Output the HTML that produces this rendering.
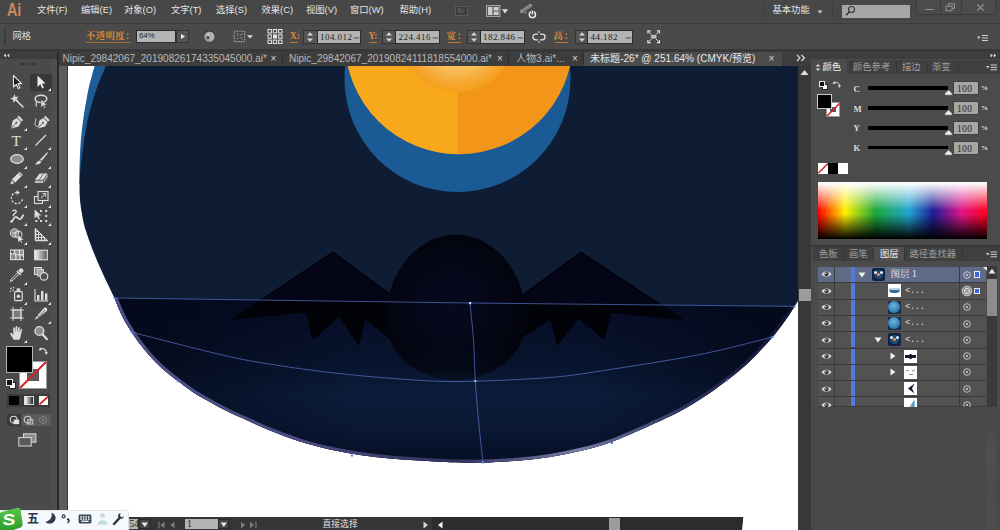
<!DOCTYPE html>
<html lang="zh-CN">
<head>
<meta charset="utf-8">
<title>Adobe Illustrator</title>
<style>
html,body{margin:0;padding:0;}
body{width:1000px;height:530px;overflow:hidden;background:#4a4a4a;position:relative;font-family:"Liberation Sans","Noto Sans CJK SC",sans-serif;font-size:9px;color:#e0e0e0;}
.abs{position:absolute;}
.t{position:absolute;white-space:nowrap;line-height:1;}
#menubar{left:0;top:0;width:1000px;height:22px;background:#474747;}
#menuline{left:0;top:22.5px;width:1000px;height:1.5px;background:#3c3c3c;}
#ctrlbar{left:0;top:24px;width:1000px;height:25px;background:#4a4a4a;}
#band{left:0;top:49px;width:1000px;height:3px;background:#383838;}
#tabbar{left:58px;top:52px;width:753px;height:14px;background:#3d3d3d;}
#toolhead{left:0;top:52px;width:56.5px;height:7px;background:#3d3d3d;}
#tools{left:0;top:59px;width:56.5px;height:471px;background:linear-gradient(90deg,#4a4a4a 0,#4a4a4a 50px,#4e4e4e 51px,#4e4e4e 100%);}
#toolgap{left:56.5px;top:52px;width:2px;height:478px;background:#2a2a2a;}
#paste{left:58.5px;top:66px;width:739.5px;height:451px;background:linear-gradient(90deg,#5c5c5c 0,#5c5c5c 8.5px,#3a3a3a 8.5px,#3a3a3a 9.5px,#fff 9.5px);}
#canvas{left:68px;top:66px;width:730px;height:451px;background:#fff;overflow:hidden;}
#vscroll{left:798px;top:66px;width:13px;height:464px;background:#383838;}
#dock{left:811px;top:52px;width:189px;height:478px;background:#4a4a4a;}
#status{left:58px;top:517px;width:685px;height:13px;background:#363636;}
.mi{top:6px;}
.lbl{font-family:"Liberation Serif","Noto Serif CJK SC",serif;font-weight:700;font-size:9.3px;color:#e08a35;}
.fld{background:#b4b4b4;border:1px solid #2c2c2c;box-sizing:border-box;}
.ft{position:absolute;left:2.5px;top:2px;font-family:"Liberation Serif","Noto Serif CJK SC",serif;font-size:9px;letter-spacing:0.45px;line-height:1;color:#1e1e1e;white-space:nowrap;}
.tb{top:53.5px;font-size:10.05px;color:#b8b8b8;}
.tx{top:54px;font-size:10px;color:#d8d8d8;}
.ptab{top:63.2px;font-size:9.3px;color:#9e9e9e;}
</style>
</head>
<body>
<div id="menubar" class="abs"></div>
<div id="menuline" class="abs"></div>
<div id="ctrlbar" class="abs"></div>
<div id="band" class="abs"></div>
<div id="tabbar" class="abs"></div>
<div id="toolhead" class="abs"></div>
<div id="tools" class="abs"></div>
<div id="toolgap" class="abs"></div>
<div id="paste" class="abs"></div>
<div id="canvas" class="abs">
<!--ART--><svg class="abs" style="left:0;top:0" width="730" height="451" viewBox="68 66 730 451">
<defs>
<clipPath id="cpMain"><path d="M105.8,66.0 C104.2,70.0 99.2,81.0 96.2,90.0 C93.2,99.0 89.9,110.0 87.7,120.0 C85.5,130.0 84.0,141.7 82.8,150.0 C81.6,158.3 80.9,164.2 80.4,170.0 C79.9,175.8 79.7,180.5 79.6,185.0 C79.5,189.5 79.5,192.7 79.8,197.0 C80.1,201.3 80.4,205.1 81.4,210.6 C82.4,216.1 83.0,221.8 85.6,230.0 C88.2,238.2 92.6,250.0 96.8,260.0 C101.0,270.0 107.6,283.7 110.6,290.0 C113.5,296.3 112.5,293.6 114.5,298.0 C116.5,302.4 119.5,310.7 122.4,316.4 C125.3,322.1 128.4,327.1 131.7,332.2 C135.0,337.3 138.7,342.3 142.2,346.8 C145.7,351.3 148.8,355.0 152.8,359.2 C156.8,363.4 161.8,368.1 166.0,371.8 C170.2,375.5 173.5,377.8 177.9,381.1 C182.3,384.4 187.8,388.6 192.4,391.7 C197.0,394.8 201.2,397.1 205.6,399.6 C210.0,402.2 214.4,404.7 218.8,407.0 C223.2,409.3 227.6,411.5 232.0,413.6 C236.4,415.7 238.9,416.6 245.2,419.4 C251.5,422.2 260.9,426.8 270.0,430.5 C279.1,434.2 290.0,438.3 300.0,441.5 C310.0,444.7 320.0,447.2 330.0,449.5 C340.0,451.8 350.0,453.5 360.0,455.0 C370.0,456.5 380.0,457.6 390.0,458.5 C400.0,459.4 410.0,460.0 420.0,460.6 C430.0,461.2 439.6,461.9 450.0,462.2 C460.4,462.5 470.8,462.9 482.5,462.6 C494.2,462.3 508.8,461.4 520.0,460.5 C531.2,459.6 540.0,458.6 550.0,457.0 C560.0,455.4 570.0,453.4 580.0,451.0 C590.0,448.6 600.0,446.0 610.0,442.5 C620.0,439.0 632.8,433.1 640.0,430.0 C647.2,426.9 646.6,427.1 653.2,424.0 C659.8,420.9 670.8,416.2 679.6,411.5 C688.4,406.8 698.1,400.8 706.0,395.6 C713.9,390.4 720.5,385.4 727.1,380.3 C733.7,375.2 740.3,369.9 745.6,365.2 C750.9,360.5 754.3,356.7 758.8,352.0 C763.3,347.3 768.1,342.3 772.5,337.0 C776.9,331.7 781.5,325.5 785.2,320.4 C788.9,315.3 790.0,313.3 794.5,306.4 C799.0,299.5 809.1,283.6 812.0,279.0 L812,66 Z"/></clipPath>
<clipPath id="cpLow"><path d="M114.5,298.0 C115.8,301.1 119.5,310.7 122.4,316.4 C125.3,322.1 128.4,327.1 131.7,332.2 C135.0,337.3 138.7,342.3 142.2,346.8 C145.7,351.3 148.8,355.0 152.8,359.2 C156.8,363.4 161.8,368.1 166.0,371.8 C170.2,375.5 173.5,377.8 177.9,381.1 C182.3,384.4 187.8,388.6 192.4,391.7 C197.0,394.8 201.2,397.1 205.6,399.6 C210.0,402.2 214.4,404.7 218.8,407.0 C223.2,409.3 227.6,411.5 232.0,413.6 C236.4,415.7 238.9,416.6 245.2,419.4 C251.5,422.2 260.9,426.8 270.0,430.5 C279.1,434.2 290.0,438.3 300.0,441.5 C310.0,444.7 320.0,447.2 330.0,449.5 C340.0,451.8 350.0,453.5 360.0,455.0 C370.0,456.5 380.0,457.6 390.0,458.5 C400.0,459.4 410.0,460.0 420.0,460.6 C430.0,461.2 439.6,461.9 450.0,462.2 C460.4,462.5 470.8,462.9 482.5,462.6 C494.2,462.3 508.8,461.4 520.0,460.5 C531.2,459.6 540.0,458.6 550.0,457.0 C560.0,455.4 570.0,453.4 580.0,451.0 C590.0,448.6 600.0,446.0 610.0,442.5 C620.0,439.0 632.8,433.1 640.0,430.0 C647.2,426.9 646.6,427.1 653.2,424.0 C659.8,420.9 670.8,416.2 679.6,411.5 C688.4,406.8 698.1,400.8 706.0,395.6 C713.9,390.4 720.5,385.4 727.1,380.3 C733.7,375.2 740.3,369.9 745.6,365.2 C750.9,360.5 754.3,356.7 758.8,352.0 C763.3,347.3 768.1,342.3 772.5,337.0 C776.9,331.7 781.5,325.5 785.2,320.4 C788.9,315.3 793.0,308.7 794.5,306.4 L794.5,306.4 L114.5,298 Z"/></clipPath>
<linearGradient id="gLow" x1="0" y1="298" x2="0" y2="463" gradientUnits="userSpaceOnUse">
<stop offset="0" stop-color="#060c24"/><stop offset="0.4" stop-color="#08142e"/><stop offset="0.58" stop-color="#0b1c3a"/><stop offset="0.78" stop-color="#0a1834"/><stop offset="1" stop-color="#050e24"/>
</linearGradient>
<linearGradient id="gSide" x1="115" y1="0" x2="798" y2="0" gradientUnits="userSpaceOnUse">
<stop offset="0" stop-color="#030716" stop-opacity="0.75"/><stop offset="0.35" stop-color="#030716" stop-opacity="0"/><stop offset="0.7" stop-color="#030716" stop-opacity="0"/><stop offset="1" stop-color="#030716" stop-opacity="0.75"/>
</linearGradient>
<radialGradient id="gGlow" cx="457" cy="34" r="58" gradientUnits="userSpaceOnUse">
<stop offset="0" stop-color="#fde6ae"/><stop offset="0.5" stop-color="#fac869"/><stop offset="0.85" stop-color="#f6a832"/><stop offset="1" stop-color="#f59f1c"/>
</radialGradient>
<radialGradient id="gBody" cx="452" cy="305" r="80" gradientUnits="userSpaceOnUse">
<stop offset="0" stop-color="#070a20"/><stop offset="0.55" stop-color="#050717"/><stop offset="1" stop-color="#02030a"/>
</radialGradient>
<linearGradient id="gRim" x1="110" y1="0" x2="800" y2="0" gradientUnits="userSpaceOnUse">
<stop offset="0" stop-color="#4e5088"/><stop offset="0.3" stop-color="#484a80"/><stop offset="0.5" stop-color="#30325e"/><stop offset="0.68" stop-color="#7a7ca8"/><stop offset="0.85" stop-color="#3a3c70" stop-opacity="0.7"/><stop offset="1" stop-color="#2a2c60" stop-opacity="0.3"/>
</linearGradient>
<linearGradient id="gBodyFade" x1="0" y1="345" x2="0" y2="381" gradientUnits="userSpaceOnUse">
<stop offset="0" stop-color="#0a1833" stop-opacity="0"/><stop offset="0.7" stop-color="#0a1833" stop-opacity="0.25"/><stop offset="1" stop-color="#0a1833" stop-opacity="0.7"/>
</linearGradient>
<clipPath id="cpSunL"><rect x="300" y="0" width="157.7" height="300"/></clipPath>
</defs>
<path d="M94.6,66.0 C93.5,70.0 90.2,81.0 88.3,90.0 C86.4,99.0 84.5,111.2 83.2,120.0 C81.9,128.8 81.3,135.1 80.7,142.6 C80.1,150.1 79.8,158.1 79.6,165.0 C79.4,171.9 79.4,180.8 79.4,184.0 L200,184 L200,66 Z" fill="#1d5c96"/>
<path d="M105.8,66.0 C104.2,70.0 99.2,81.0 96.2,90.0 C93.2,99.0 89.9,110.0 87.7,120.0 C85.5,130.0 84.0,141.7 82.8,150.0 C81.6,158.3 80.9,164.2 80.4,170.0 C79.9,175.8 79.7,180.5 79.6,185.0 C79.5,189.5 79.5,192.7 79.8,197.0 C80.1,201.3 80.4,205.1 81.4,210.6 C82.4,216.1 83.0,221.8 85.6,230.0 C88.2,238.2 92.6,250.0 96.8,260.0 C101.0,270.0 107.6,283.7 110.6,290.0 C113.5,296.3 112.5,293.6 114.5,298.0 C116.5,302.4 119.5,310.7 122.4,316.4 C125.3,322.1 128.4,327.1 131.7,332.2 C135.0,337.3 138.7,342.3 142.2,346.8 C145.7,351.3 148.8,355.0 152.8,359.2 C156.8,363.4 161.8,368.1 166.0,371.8 C170.2,375.5 173.5,377.8 177.9,381.1 C182.3,384.4 187.8,388.6 192.4,391.7 C197.0,394.8 201.2,397.1 205.6,399.6 C210.0,402.2 214.4,404.7 218.8,407.0 C223.2,409.3 227.6,411.5 232.0,413.6 C236.4,415.7 238.9,416.6 245.2,419.4 C251.5,422.2 260.9,426.8 270.0,430.5 C279.1,434.2 290.0,438.3 300.0,441.5 C310.0,444.7 320.0,447.2 330.0,449.5 C340.0,451.8 350.0,453.5 360.0,455.0 C370.0,456.5 380.0,457.6 390.0,458.5 C400.0,459.4 410.0,460.0 420.0,460.6 C430.0,461.2 439.6,461.9 450.0,462.2 C460.4,462.5 470.8,462.9 482.5,462.6 C494.2,462.3 508.8,461.4 520.0,460.5 C531.2,459.6 540.0,458.6 550.0,457.0 C560.0,455.4 570.0,453.4 580.0,451.0 C590.0,448.6 600.0,446.0 610.0,442.5 C620.0,439.0 632.8,433.1 640.0,430.0 C647.2,426.9 646.6,427.1 653.2,424.0 C659.8,420.9 670.8,416.2 679.6,411.5 C688.4,406.8 698.1,400.8 706.0,395.6 C713.9,390.4 720.5,385.4 727.1,380.3 C733.7,375.2 740.3,369.9 745.6,365.2 C750.9,360.5 754.3,356.7 758.8,352.0 C763.3,347.3 768.1,342.3 772.5,337.0 C776.9,331.7 781.5,325.5 785.2,320.4 C788.9,315.3 790.0,313.3 794.5,306.4 C799.0,299.5 809.1,283.6 812.0,279.0 L812,66 Z" fill="#0e1d34"/>
<g clip-path="url(#cpMain)">
<circle cx="457.5" cy="79" r="113" fill="#1b5b95"/>
<circle cx="459" cy="40.3" r="114" fill="#f39519"/>
<circle cx="459" cy="40.3" r="114" fill="#f7a81b" clip-path="url(#cpSunL)"/>
<circle cx="457" cy="34" r="58" fill="url(#gGlow)"/>
</g>
<g clip-path="url(#cpLow)">
<rect x="100" y="290" width="720" height="180" fill="url(#gLow)"/>
<rect x="100" y="290" width="720" height="180" fill="url(#gSide)"/>
<path d="M114.5,298.0 C115.8,301.1 119.5,310.7 122.4,316.4 C125.3,322.1 128.4,327.1 131.7,332.2 C135.0,337.3 138.7,342.3 142.2,346.8 C145.7,351.3 148.8,355.0 152.8,359.2 C156.8,363.4 161.8,368.1 166.0,371.8 C170.2,375.5 173.5,377.8 177.9,381.1 C182.3,384.4 187.8,388.6 192.4,391.7 C197.0,394.8 201.2,397.1 205.6,399.6 C210.0,402.2 214.4,404.7 218.8,407.0 C223.2,409.3 227.6,411.5 232.0,413.6 C236.4,415.7 238.9,416.6 245.2,419.4 C251.5,422.2 260.9,426.8 270.0,430.5 C279.1,434.2 290.0,438.3 300.0,441.5 C310.0,444.7 320.0,447.2 330.0,449.5 C340.0,451.8 350.0,453.5 360.0,455.0 C370.0,456.5 380.0,457.6 390.0,458.5 C400.0,459.4 410.0,460.0 420.0,460.6 C430.0,461.2 439.6,461.9 450.0,462.2 C460.4,462.5 470.8,462.9 482.5,462.6 C494.2,462.3 508.8,461.4 520.0,460.5 C531.2,459.6 540.0,458.6 550.0,457.0 C560.0,455.4 570.0,453.4 580.0,451.0 C590.0,448.6 600.0,446.0 610.0,442.5 C620.0,439.0 632.8,433.1 640.0,430.0 C647.2,426.9 646.6,427.1 653.2,424.0 C659.8,420.9 670.8,416.2 679.6,411.5 C688.4,406.8 698.1,400.8 706.0,395.6 C713.9,390.4 720.5,385.4 727.1,380.3 C733.7,375.2 740.3,369.9 745.6,365.2 C750.9,360.5 754.3,356.7 758.8,352.0 C763.3,347.3 768.1,342.3 772.5,337.0 C776.9,331.7 781.5,325.5 785.2,320.4 C788.9,315.3 793.0,308.7 794.5,306.4" fill="none" stroke="url(#gRim)" stroke-width="6"/>
</g>
<g clip-path="url(#cpMain)">
<polygon points="333.0,252.3 232.8,319.0 306.6,311.6 313.0,339.0 339.4,315.5 358.6,344.4 365.0,318.0 392.0,340.0 392.0,296.0" fill="#040617" stroke="#02030b" stroke-width="1.6" stroke-linejoin="round"/>
<polygon points="581.0,252.3 681.7,319.0 610.5,312.3 604.0,339.0 578.4,317.4 557.5,344.4 551.0,318.0 520.0,338.0 520.0,297.0" fill="#040617" stroke="#02030b" stroke-width="1.6" stroke-linejoin="round"/>
<g clip-path="url(#cpLow)"><polygon points="333.0,252.3 232.8,319.0 306.6,311.6 313.0,339.0 339.4,315.5 358.6,344.4 365.0,318.0 392.0,340.0 392.0,296.0" fill="#020309"/><polygon points="581.0,252.3 681.7,319.0 610.5,312.3 604.0,339.0 578.4,317.4 557.5,344.4 551.0,318.0 520.0,338.0 520.0,297.0" fill="#020309"/></g>
<path d="M386,320 A70,85.5 0 0 1 526,320 A70,60 0 0 1 386,320 Z" fill="url(#gBody)"/>
<path d="M386,320 A70,85.5 0 0 1 526,320 A70,60 0 0 1 386,320 Z" fill="url(#gBodyFade)"/>
</g>
<g fill="none" stroke="#6686e6" stroke-width="0.8" stroke-opacity="0.75">
<path d="M114.5,298 L470,303 L794.5,306.4"/>
<path d="M131.7,332.2 C145.8,335.8 194.6,348.4 216.0,353.5 C237.4,358.6 241.0,359.3 260.0,362.5 C279.0,365.7 306.7,369.8 330.0,372.5 C353.3,375.2 378.3,377.5 400.0,379.0 C421.7,380.5 435.0,381.8 460.0,381.5 C485.0,381.2 525.0,379.5 550.0,377.5 C575.0,375.5 585.0,373.3 610.0,369.5 C635.0,365.7 672.9,359.9 700.0,354.5 C727.1,349.1 760.4,339.9 772.5,337.0"/>
<path d="M470.0,303.0 C470.6,309.2 472.6,327.0 473.5,340.0 C474.4,353.0 474.4,366.8 475.3,381.0 C476.2,395.2 477.7,411.4 479.0,425.0 C480.3,438.6 482.3,456.2 483.0,462.4"/>
</g>
<!--DOTS--><rect x="113.5" y="297.0" width="2" height="2" fill="#5a7de4"/><rect x="130.7" y="331.2" width="2" height="2" fill="#5a7de4"/><rect x="176.9" y="380.1" width="2" height="2" fill="#5a7de4"/><rect x="793.5" y="305.4" width="2" height="2" fill="#5a7de4"/><rect x="771.5" y="336.0" width="2" height="2" fill="#5a7de4"/><rect x="726.1" y="379.3" width="2" height="2" fill="#5a7de4"/><rect x="482.0" y="461.4" width="2" height="2" fill="#5a7de4"/><rect x="351.0" y="454.5" width="2" height="2" fill="#5a7de4"/><rect x="611.0" y="442.0" width="2" height="2" fill="#5a7de4"/><rect x="469" y="302" width="2.2" height="2.2" fill="#c8d4fa"/><rect x="474.3" y="380" width="2" height="2" fill="#a8b8f4"/>
</svg><!--/ART-->
</div>
<div id="vscroll" class="abs"></div>
<div id="dock" class="abs"></div>
<div id="status" class="abs"></div>
<!--MENU-->
<div class="t" style="left:7px;top:2.2px;font-size:17.5px;font-weight:bold;color:#c9885c;transform:scaleX(0.82);transform-origin:0 0;">Ai</div>
<div id="menus" class="abs" style="left:0;top:0;height:22px;font-size:9.3px;color:#e6e6e6;">
<span class="t mi" style="left:37px;">文件(F)</span>
<span class="t mi" style="left:81px;">编辑(E)</span>
<span class="t mi" style="left:124px;">对象(O)</span>
<span class="t mi" style="left:171px;">文字(T)</span>
<span class="t mi" style="left:216px;">选择(S)</span>
<span class="t mi" style="left:261.5px;">效果(C)</span>
<span class="t mi" style="left:306px;">视图(V)</span>
<span class="t mi" style="left:350px;">窗口(W)</span>
<span class="t mi" style="left:399.5px;">帮助(H)</span>
</div>
<div class="abs" style="left:455px;top:6px;width:13px;height:10px;background:#3c3c3c;border:1px solid #5a5a5a;box-sizing:border-box;"></div>
<div class="t" style="left:457.5px;top:7.5px;font-size:6.5px;font-weight:bold;color:#5e5e5e;">Br</div>
<svg class="abs" style="left:486px;top:5px" width="24" height="12" viewBox="0 0 24 12"><rect x="0.5" y="0.5" width="13.5" height="11" fill="#5a5a5a" stroke="#a4a4a4"/><rect x="2" y="2" width="4.4" height="8" fill="#cdcdcd"/><rect x="7.6" y="2" width="5" height="3.6" fill="#cdcdcd"/><rect x="7.6" y="6.6" width="5" height="3.4" fill="#cdcdcd"/><path d="M16,4.2 L22,4.2 L19,8.4 Z" fill="#e0e0e0"/></svg>
<svg class="abs" style="left:519px;top:3px" width="20" height="17" viewBox="0 0 20 17"><path d="M2.6,8.6 L11.4,2.6" stroke="#8c8c8c" stroke-width="3.6" stroke-linecap="round"/><path d="M4.2,5.6 L6.6,9.2 M6.6,4 L9,7.6 M9,2.4 L11.2,5.8" stroke="#565656" stroke-width="0.7"/><path d="M5.2,9.6 L7.6,8.2 L7,11.6 Z" fill="#8c8c8c"/><circle cx="13.4" cy="11.6" r="3.1" fill="#474747" stroke="#ececec" stroke-width="1.5"/><path d="M13.4,6.6 L13.4,11.4" stroke="#474747" stroke-width="3"/><path d="M13.4,7.6 L13.4,11.6" stroke="#ececec" stroke-width="1.5"/></svg>
<div class="t" style="left:772.5px;top:6px;font-size:9.3px;color:#e6e6e6;">基本功能</div>
<svg class="abs" style="left:817px;top:10px" width="7" height="5"><path d="M0.5,0.5 L5.5,0.5 L3,3.5 Z" fill="#d0d0d0"/></svg>
<div class="abs" style="left:841.5px;top:4.5px;width:68.5px;height:13px;background:#a6a6a6;"></div>
<svg class="abs" style="left:845px;top:5px" width="12" height="12" viewBox="0 0 12 12"><circle cx="6.5" cy="4.5" r="3" fill="none" stroke="#333" stroke-width="1.1"/><path d="M4.3,6.8 L1.2,10.2" stroke="#333" stroke-width="1.5"/></svg>
<div class="abs" style="left:916.5px;top:0;width:79px;height:13.5px;background:#4b4b4b;"></div>
<div class="abs" style="left:916px;top:0;width:1px;height:14px;background:#3a3a3a;"></div><div class="abs" style="left:939.5px;top:0;width:1px;height:14px;background:#3a3a3a;"></div><div class="abs" style="left:960.5px;top:0;width:1px;height:14px;background:#3a3a3a;"></div><div class="abs" style="left:995px;top:0;width:1px;height:14px;background:#3a3a3a;"></div><div class="abs" style="left:916px;top:13.5px;width:80px;height:1px;background:#3a3a3a;"></div>
<div class="abs" style="left:764px;top:2px;width:1px;height:18px;background:#3e3e3e;"></div><div class="abs" style="left:832px;top:2px;width:1px;height:18px;background:#3e3e3e;"></div>
<div class="abs" style="left:925px;top:8.5px;width:8.5px;height:1.8px;background:#8e8e8e;"></div>
<svg class="abs" style="left:945px;top:2.5px" width="11" height="9" viewBox="0 0 11 9"><rect x="3.5" y="0.8" width="6" height="4.6" fill="none" stroke="#8e8e8e" stroke-width="1.1"/><rect x="1" y="3.2" width="6" height="4.6" fill="#4b4b4b" stroke="#8e8e8e" stroke-width="1.1"/></svg>
<svg class="abs" style="left:975.5px;top:3px" width="9" height="9" viewBox="0 0 9 9"><path d="M1.2,1.2 L7.8,7.8 M7.8,1.2 L1.2,7.8" stroke="#8e8e8e" stroke-width="1.3"/></svg>
<!--/MENU-->
<!--CTRL-->
<div class="abs" style="left:4px;top:28px;width:2px;height:17px;background:repeating-linear-gradient(#2f2f2f 0 1px,#4a4a4a 1px 2px);"></div>
<div class="t" style="left:12.5px;top:31.5px;font-size:9.3px;color:#dcdcdc;">网格</div>
<div class="t lbl" style="left:86px;top:31.5px;letter-spacing:0.45px;">不透明度：</div>
<div class="abs" style="left:86px;top:42px;width:45px;height:1px;background:#c07830;opacity:0.75;"></div>
<div class="abs fld" style="left:136px;top:30px;width:40px;height:13px;"><span class="ft" style="font-family:'Liberation Sans',sans-serif;font-size:7.8px;left:2px;top:1.2px;letter-spacing:0;">64%</span></div>
<div class="abs" style="left:176px;top:30px;width:13px;height:13px;background:#545454;border:1px solid #333;box-sizing:border-box;"></div>
<svg class="abs" style="left:176px;top:30px" width="13" height="13"><path d="M5,4 L9,6.5 L5,9 Z" fill="#f0f0f0"/></svg>
<svg class="abs" style="left:202px;top:29px" width="15" height="15" viewBox="0 0 15 15"><defs><radialGradient id="rg1" cx="0.6" cy="0.4" r="0.7"><stop offset="0" stop-color="#d6d6d6"/><stop offset="1" stop-color="#8a8a8a"/></radialGradient></defs><circle cx="7.3" cy="7.5" r="5.9" fill="#2e2e2e"/><circle cx="7.3" cy="7.8" r="5.3" fill="url(#rg1)"/><circle cx="6" cy="8.6" r="1.7" fill="#4a4a4a"/><path d="M7.8,4.4 L8.6,7 L10.6,7.8" fill="none" stroke="#777" stroke-width="0.8"/></svg>
<svg class="abs" style="left:233px;top:29px" width="22" height="15" viewBox="0 0 22 15"><rect x="1.2" y="2.2" width="10.4" height="10.4" fill="none" stroke="#b4b4b4" stroke-width="1.1" stroke-dasharray="1.3 1.3"/><path d="M3.6,4.6 L9.2,10.2 M9.2,4.6 L3.6,10.2" stroke="#a0a0a0" stroke-width="1"/><circle cx="6.4" cy="7.4" r="1.5" fill="#4a4a4a"/><path d="M14,6.2 L20,6.2 L17,9.4 Z" fill="#e0e0e0"/></svg>
<svg class="abs" style="left:267px;top:28px" width="16" height="17" viewBox="0 0 16 17"><g fill="none" stroke="#e4e4e4" stroke-width="1"><rect x="1" y="1.5" width="3.4" height="3.4"/><rect x="6.3" y="1.5" width="3.4" height="3.4"/><rect x="11.6" y="1.5" width="3.4" height="3.4"/><rect x="1" y="6.8" width="3.4" height="3.4"/><rect x="11.6" y="6.8" width="3.4" height="3.4"/><rect x="1" y="12.1" width="3.4" height="3.4"/><rect x="6.3" y="12.1" width="3.4" height="3.4"/><rect x="11.6" y="12.1" width="3.4" height="3.4"/></g><rect x="6" y="6.5" width="4" height="4" fill="#e4e4e4"/></svg>
<div class="t lbl" style="left:290px;top:31.5px;font-family:'Liberation Serif','Noto Serif CJK SC',serif;">X:</div>
<div class="abs" style="left:290px;top:42px;width:8px;height:1px;background:#c07830;"></div>
<div class="abs" style="left:303px;top:29.5px;width:14.5px;height:14.2px;background:#555;border:1px solid #333;box-sizing:border-box;"></div>
<svg class="abs" style="left:303px;top:29.8px" width="14" height="14" viewBox="-1 0 14 14"><path d="M3,5.5 L6,2.2 L9,5.5 Z M3,8.5 L6,11.8 L9,8.5 Z" fill="#d8d8d8"/></svg><div class="abs fld" style="left:316.5px;top:29.5px;width:44.0px;height:14.2px;"><span class="ft">104.012</span><span style="position:absolute;right:0.5px;top:5px;font-size:3.6px;color:#333;letter-spacing:-0.2px;font-family:'Liberation Sans',sans-serif;">mm</span></div>
<div class="t lbl" style="left:368.5px;top:31.5px;font-family:'Liberation Serif','Noto Serif CJK SC',serif;">Y:</div>
<div class="abs" style="left:368.5px;top:42px;width:8px;height:1px;background:#c07830;"></div>
<div class="abs" style="left:381.8px;top:29.5px;width:14.5px;height:14.2px;background:#555;border:1px solid #333;box-sizing:border-box;"></div>
<svg class="abs" style="left:381.8px;top:29.8px" width="14" height="14" viewBox="-1 0 14 14"><path d="M3,5.5 L6,2.2 L9,5.5 Z M3,8.5 L6,11.8 L9,8.5 Z" fill="#d8d8d8"/></svg><div class="abs fld" style="left:395.0px;top:29.5px;width:44.5px;height:14.2px;"><span class="ft">224.416</span><span style="position:absolute;right:0.5px;top:5px;font-size:3.6px;color:#333;letter-spacing:-0.2px;font-family:'Liberation Sans',sans-serif;">mm</span></div>
<div class="t lbl" style="left:446.5px;top:31.5px;letter-spacing:1px;">宽：</div>
<div class="abs" style="left:447.5px;top:42px;width:13px;height:1px;background:#c07830;"></div>
<div class="abs" style="left:467px;top:29.5px;width:14.5px;height:14.2px;background:#555;border:1px solid #333;box-sizing:border-box;"></div>
<svg class="abs" style="left:467px;top:29.8px" width="14" height="14" viewBox="-1 0 14 14"><path d="M3,5.5 L6,2.2 L9,5.5 Z M3,8.5 L6,11.8 L9,8.5 Z" fill="#d8d8d8"/></svg><div class="abs fld" style="left:479.5px;top:29.5px;width:45.0px;height:14.2px;"><span class="ft">182.846</span><span style="position:absolute;right:0.5px;top:5px;font-size:3.6px;color:#333;letter-spacing:-0.2px;font-family:'Liberation Sans',sans-serif;">mm</span></div>
<svg class="abs" style="left:532px;top:30px" width="14" height="14" viewBox="0 0 14 14"><g fill="none" stroke="#e0e0e0" stroke-width="1.3"><path d="M6,4.2 L3.8,4.2 A2.7,2.7 0 0 0 3.8,9.8 L6,9.8"/><path d="M8,4.2 L10.2,4.2 A2.7,2.7 0 0 1 10.2,9.8 L8,9.8"/></g><path d="M7,1 L7,3 M7,11 L7,13" stroke="#e0e0e0" stroke-width="1"/></svg>
<div class="t lbl" style="left:553.5px;top:31.5px;letter-spacing:1px;">高：</div>
<div class="abs" style="left:554.5px;top:42px;width:13px;height:1px;background:#c07830;"></div>
<div class="abs" style="left:574.6px;top:29.5px;width:14.5px;height:14.2px;background:#555;border:1px solid #333;box-sizing:border-box;"></div>
<svg class="abs" style="left:574.6px;top:29.8px" width="14" height="14" viewBox="-1 0 14 14"><path d="M3,5.5 L6,2.2 L9,5.5 Z M3,8.5 L6,11.8 L9,8.5 Z" fill="#d8d8d8"/></svg><div class="abs fld" style="left:587.0px;top:29.5px;width:45.5px;height:14.2px;"><span class="ft">44.182</span><span style="position:absolute;right:0.5px;top:5px;font-size:3.6px;color:#333;letter-spacing:-0.2px;font-family:'Liberation Sans',sans-serif;">mm</span></div>
<svg class="abs" style="left:646.5px;top:30px" width="13.5" height="13.5" viewBox="0 0 15 15"><g fill="none" stroke="#e6e6e6" stroke-width="1.3"><path d="M1,4 L1,1 L4,1 M11,1 L14,1 L14,4 M14,11 L14,14 L11,14 M4,14 L1,14 L1,11"/><path d="M2,2 L5,5 M13,2 L10,5 M13,13 L10,10 M2,13 L5,10" stroke-width="1"/></g><rect x="4.5" y="5.5" width="6" height="4" fill="#bdbdbd"/></svg>
<svg class="abs" style="left:977px;top:33.5px" width="12" height="9" viewBox="0 0 12 9"><path d="M0,2.5 L3.5,2.5 L1.75,5 Z" fill="#d0d0d0"/><path d="M5,1.5 H11 M5,4 H11 M5,6.5 H11" stroke="#d0d0d0" stroke-width="1"/></svg>
<!--/CTRL-->
<!--TABS-->
<div class="abs" style="left:584px;top:52px;width:198px;height:14px;background:#4c4c4c;"></div>
<div class="abs" style="left:282px;top:53px;width:1px;height:12px;background:#2e2e2e;"></div>
<div class="abs" style="left:508px;top:53px;width:1px;height:12px;background:#2e2e2e;"></div>
<div class="abs" style="left:583px;top:53px;width:1px;height:12px;background:#2e2e2e;"></div>
<div class="t tb" id="tb1" style="left:62.5px;">Nipic_29842067_20190826174335045000.ai*</div>
<div class="t tx" style="left:270.5px;">×</div>
<div class="t tb" id="tb2" style="left:289px;">Nipic_29842067_20190824111818554000.ai*</div>
<div class="t tx" style="left:497px;">×</div>
<div class="t tb" id="tb3" style="left:516px;">人物3.ai*...</div>
<div class="t tx" style="left:572px;">×</div>
<div class="t tb" id="tb4" style="left:590px;color:#e8e8e8;">未标题-26* @ 251.64% (CMYK/预览)</div>
<div class="t tx" style="left:768.5px;">×</div>
<svg class="abs" style="left:796px;top:54px" width="10" height="8" viewBox="0 0 10 8"><path d="M1,1 L4,4 L1,7 M5.5,1 L8.5,4 L5.5,7" fill="none" stroke="#dcdcdc" stroke-width="1.2"/></svg>
<!--/TABS-->
<!--TOOLS--><div class="abs" style="left:3px;top:52.5px;width:8px;height:5px;"><svg style="display:block" width="8" height="5" viewBox="0 0 8 5"><path d="M3,0.5 L0.7,2.5 L3,4.5 Z M6.3,0.5 L4,2.5 L6.3,4.5 Z" fill="#d8d8d8"/></svg></div>
<div class="abs" style="left:20px;top:62.5px;width:16px;height:2px;background:repeating-linear-gradient(90deg,#2e2e2e 0 1.2px,#4a4a4a 1.2px 2.4px);"></div>
<div class="abs" style="left:29.5px;top:73.5px;width:22px;height:17px;background:#383838;border-radius:1px;"></div>
<div class="abs" style="left:4px;top:110.5px;width:48px;height:1px;background:#444;"></div>
<div class="abs" style="left:4px;top:186.5px;width:48px;height:1px;background:#444;"></div>
<div class="abs" style="left:4px;top:283.5px;width:48px;height:1px;background:#444;"></div>
<div class="abs" style="left:4px;top:303.5px;width:48px;height:1px;background:#444;"></div>
<svg class="abs" style="left:9.0px;top:74.0px" width="16" height="16" viewBox="0 0 16 16"><path d="M4.5,1.5 L4.5,13 L7.3,10.3 L9.2,14.6 L10.9,13.8 L9,9.6 L12.6,9.6 Z" fill="#1a1a1a" stroke="#e6e6e6" stroke-width="1.1" stroke-linejoin="round"/></svg>
<svg class="abs" style="left:33.0px;top:74.0px" width="16" height="16" viewBox="0 0 16 16"><path d="M4.5,1.5 L4.5,13 L7.3,10.3 L9.2,14.6 L10.9,13.8 L9,9.6 L12.6,9.6 Z" fill="#ececec"/></svg>
<svg class="abs" style="left:48px;top:88px" width="3" height="3"><path d="M3,0 L3,3 L0,3 Z" fill="#e8e8e8"/></svg>
<svg class="abs" style="left:9.0px;top:92.5px" width="16" height="16" viewBox="0 0 16 16"><path d="M5.5,1 L6.5,4 L9.8,3.4 L7.6,5.8 L9.4,8.6 L6.3,7.4 L4.2,10 L4.2,6.8 L1,5.6 L4.2,4.6 Z" fill="#dcdcdc"/><path d="M7.5,7.5 L14,14" stroke="#dcdcdc" stroke-width="1.6" stroke-linecap="round"/></svg>
<svg class="abs" style="left:33.0px;top:93.0px" width="16" height="16" viewBox="0 0 16 16"><ellipse cx="8" cy="5.8" rx="5.8" ry="3.6" fill="none" stroke="#dcdcdc" stroke-width="1.5"/><path d="M3.4,8.2 C2.4,10.2 4,11.2 3,13.6" fill="none" stroke="#dcdcdc" stroke-width="1.2"/><path d="M8,6.5 L8,14.5 L10,12.6 L11.3,15.2 L12.5,14.6 L11.2,12.1 L13.8,12 Z" fill="#dcdcdc" stroke="#505050" stroke-width="0.5"/></svg>
<svg class="abs" style="left:9.0px;top:114.3px" width="16" height="16" viewBox="0 0 16 16"><path d="M9.6,1.6 L14.2,6.2 L12.4,7.4 L8.4,3.4 Z" fill="#dcdcdc"/><path d="M7.8,4 L11.9,8.1 L9.6,12.6 L2,14.4 L3.8,6.4 Z" fill="#dcdcdc"/><path d="M2.2,14.2 L7,9.2" stroke="#505050" stroke-width="0.9"/><circle cx="7.4" cy="8.8" r="1" fill="#505050"/></svg>
<svg class="abs" style="left:24px;top:128.3px" width="3" height="3"><path d="M3,0 L3,3 L0,3 Z" fill="#e8e8e8"/></svg>
<svg class="abs" style="left:33.5px;top:114.3px" width="18" height="16" viewBox="0 0 18 16"><g transform="translate(1.6,0)"><path d="M9.6,1.6 L14.2,6.2 L12.4,7.4 L8.4,3.4 Z" fill="#dcdcdc"/><path d="M7.8,4 L11.9,8.1 L9.6,12.6 L2,14.4 L3.8,6.4 Z" fill="#dcdcdc"/><path d="M2.2,14.2 L7,9.2" stroke="#505050" stroke-width="0.9"/><circle cx="7.4" cy="8.8" r="1" fill="#505050"/></g><path d="M1,4.5 C3.5,6 -0.5,9 1.5,11.5 C2.2,12.4 3,12.6 3.6,12.4" fill="none" stroke="#dcdcdc" stroke-width="1"/></svg>
<div class="t" style="left:11.5px;top:132.5px;font-family:'Liberation Serif',serif;font-size:15.5px;color:#dcdcdc;">T</div>
<svg class="abs" style="left:24px;top:146.5px" width="3" height="3"><path d="M3,0 L3,3 L0,3 Z" fill="#e8e8e8"/></svg>
<svg class="abs" style="left:33.0px;top:132.0px" width="16" height="16" viewBox="0 0 16 16"><path d="M2.5,13.5 L13,3" stroke="#dcdcdc" stroke-width="1.3"/></svg>
<svg class="abs" style="left:48px;top:146.5px" width="3" height="3"><path d="M3,0 L3,3 L0,3 Z" fill="#e8e8e8"/></svg>
<svg class="abs" style="left:9.0px;top:151.0px" width="16" height="16" viewBox="0 0 16 16"><ellipse cx="8" cy="8" rx="6.3" ry="4.3" fill="#8e8e8e" stroke="#dcdcdc" stroke-width="1.2"/></svg>
<svg class="abs" style="left:24px;top:166px" width="3" height="3"><path d="M3,0 L3,3 L0,3 Z" fill="#e8e8e8"/></svg>
<svg class="abs" style="left:33.0px;top:150.5px" width="16" height="16" viewBox="0 0 16 16"><path d="M14.2,1.2 L15,2 L8.6,10 L7,8.8 Z" fill="#dcdcdc"/><path d="M6.6,9.4 L8.2,10.8 C7.6,13 5.6,13.8 1.6,13.4 C3.6,12.6 3.8,10.2 6.6,9.4 Z" fill="#dcdcdc"/></svg>
<svg class="abs" style="left:48px;top:166px" width="3" height="3"><path d="M3,0 L3,3 L0,3 Z" fill="#e8e8e8"/></svg>
<svg class="abs" style="left:9.0px;top:169.5px" width="16" height="16" viewBox="0 0 16 16"><path d="M10.6,1.8 L13.8,5 L6,12.8 L2.8,9.6 Z" fill="#dcdcdc"/><path d="M2.4,10.4 L5.2,13.2 L1.4,14.4 Z" fill="#dcdcdc"/><path d="M9.4,3 L12.6,6.2" stroke="#505050" stroke-width="0.9"/></svg>
<svg class="abs" style="left:24px;top:184.5px" width="3" height="3"><path d="M3,0 L3,3 L0,3 Z" fill="#e8e8e8"/></svg>
<svg class="abs" style="left:33.0px;top:169.5px" width="16" height="16" viewBox="0 0 16 16"><path d="M6.6,3.4 L14.6,3.4 L10.2,9.8 L2,9.8 Z" fill="#dcdcdc"/><path d="M2,10.6 L10.2,10.6 L10.2,13 L2,13 Z" fill="#bdbdbd"/><path d="M10.9,10.2 L15,4.4 L15,6.8 L10.9,12.8 Z" fill="#a8a8a8"/><path d="M6.4,9.8 L10.4,3.6" stroke="#505050" stroke-width="0.8"/></svg>
<svg class="abs" style="left:48px;top:184.5px" width="3" height="3"><path d="M3,0 L3,3 L0,3 Z" fill="#e8e8e8"/></svg>
<svg class="abs" style="left:9.0px;top:189.5px" width="16" height="16" viewBox="0 0 16 16"><path d="M8,2.4 A5.6,5.6 0 1 0 13.6,8" fill="none" stroke="#dcdcdc" stroke-width="1.3" stroke-dasharray="2.2 1.5"/><path d="M7.6,0.2 L11,2.6 L7.6,5 Z" fill="#dcdcdc"/></svg>
<svg class="abs" style="left:24px;top:204.5px" width="3" height="3"><path d="M3,0 L3,3 L0,3 Z" fill="#e8e8e8"/></svg>
<svg class="abs" style="left:33.0px;top:189.5px" width="16" height="16" viewBox="0 0 16 16"><rect x="1.5" y="6.5" width="8" height="7" fill="none" stroke="#dcdcdc" stroke-width="1.1"/><rect x="5" y="1.5" width="10" height="9" fill="#505050" stroke="#dcdcdc" stroke-width="1.1"/><path d="M8,8 L12.4,4 M9.6,3.6 L12.6,3.6 L12.6,6.6" fill="none" stroke="#dcdcdc" stroke-width="1"/></svg>
<svg class="abs" style="left:48px;top:204.5px" width="3" height="3"><path d="M3,0 L3,3 L0,3 Z" fill="#e8e8e8"/></svg>
<svg class="abs" style="left:9.0px;top:208.0px" width="16" height="16" viewBox="0 0 16 16"><path d="M1.6,13.6 C4.6,13.2 4.2,9.6 6.4,9 C8.4,8.4 8.8,11.6 11.2,11 C13.2,10.4 13.4,7.6 14.6,6.8" fill="none" stroke="#dcdcdc" stroke-width="1.8"/><path d="M3.4,3.2 C5.8,1 8.4,2.6 6.6,4.8 C5.4,6.2 3.6,6.4 4.4,8.2" fill="none" stroke="#dcdcdc" stroke-width="1.4"/><circle cx="2.6" cy="13.4" r="1.2" fill="#dcdcdc"/></svg>
<svg class="abs" style="left:24px;top:223px" width="3" height="3"><path d="M3,0 L3,3 L0,3 Z" fill="#e8e8e8"/></svg>
<svg class="abs" style="left:33.0px;top:208.0px" width="16" height="16" viewBox="0 0 16 16"><g fill="#dcdcdc"><rect x="7" y="2" width="2" height="2"/><rect x="12.2" y="2" width="2" height="2"/><rect x="12.2" y="7" width="2" height="2"/><rect x="12.2" y="12" width="2" height="2"/><rect x="7" y="12" width="2" height="2"/><rect x="2.4" y="12" width="2" height="2"/></g><path d="M1.6,1.4 L1.6,10.4 L3.9,8.2 L5.5,11.4 L6.9,10.7 L5.4,7.6 L8.4,7.5 Z" fill="#dcdcdc"/></svg>
<svg class="abs" style="left:48px;top:223px" width="3" height="3"><path d="M3,0 L3,3 L0,3 Z" fill="#e8e8e8"/></svg>
<svg class="abs" style="left:9.0px;top:226.5px" width="16" height="17" viewBox="0 0 16 17"><circle cx="5.6" cy="6" r="4.2" fill="#8a8a8a" stroke="#dcdcdc" stroke-width="1"/><circle cx="9.4" cy="7.6" r="3.6" fill="none" stroke="#dcdcdc" stroke-width="1"/><path d="M3.2,6 H8" stroke="#dcdcdc" stroke-width="1"/><path d="M9,7.6 L9,15.4 L10.9,13.6 L12.2,16 L13.3,15.4 L12.1,13.1 L14.6,13 Z" fill="#ececec" stroke="#505050" stroke-width="0.4"/></svg>
<svg class="abs" style="left:24px;top:242px" width="3" height="3"><path d="M3,0 L3,3 L0,3 Z" fill="#e8e8e8"/></svg>
<svg class="abs" style="left:33.0px;top:227.0px" width="16" height="16" viewBox="0 0 16 16"><path d="M2.5,1.5 L2.5,13.5 L14.5,13.5 L2.5,1.5 Z" fill="none" stroke="#dcdcdc" stroke-width="1"/><path d="M5.5,4.5 V13.5 M8.5,7.5 V13.5 M11.5,10.5 V13.5 M2.5,10.5 H11.5 M2.5,7.5 H8.5 M2.5,4.5 H5.5" stroke="#dcdcdc" stroke-width="1"/><path d="M2.5,1.5 V13.5 M2.5,13.5 H14.5" stroke="#dcdcdc" stroke-width="1.6"/></svg>
<svg class="abs" style="left:48px;top:242px" width="3" height="3"><path d="M3,0 L3,3 L0,3 Z" fill="#e8e8e8"/></svg>
<svg class="abs" style="left:9.0px;top:247.0px" width="16" height="16" viewBox="0 0 16 16"><rect x="1.6" y="3" width="12.8" height="9.6" fill="#8a8a8a" stroke="#dcdcdc" stroke-width="1.1"/><path d="M1.6,7 C5,5.4 9,9.6 14.4,7.4 M6,3 C4.6,6 8.4,9 6.4,12.6 M10.4,3 C9.4,6 12.4,9.4 10.8,12.6" fill="none" stroke="#efefef" stroke-width="1"/><path d="M2,4 l2,2 M12,10 l2,2" stroke="#3c3c3c" stroke-width="1.2"/></svg>
<svg class="abs" style="left:33.0px;top:247.0px" width="16" height="16" viewBox="0 0 16 16"><defs><linearGradient id="tg" x1="0" x2="1" y1="0" y2="0"><stop offset="0" stop-color="#f4f4f4"/><stop offset="1" stop-color="#5a5a5a"/></linearGradient></defs><rect x="1.6" y="3.2" width="12.8" height="9.6" fill="url(#tg)" stroke="#dcdcdc" stroke-width="1.1"/></svg>
<svg class="abs" style="left:9.0px;top:266.5px" width="16" height="16" viewBox="0 0 16 16"><path d="M11.2,1.4 C12.6,0.4 15.2,2.8 14.2,4.4 L12,6.6 L9,3.6 Z" fill="#dcdcdc"/><path d="M8.2,3.4 L12.4,7.6 L11.4,8.4 L7.4,4.4 Z" fill="#dcdcdc"/><path d="M8.6,5.8 L10,7.2 L4,13.2 L1.6,14.6 L1.2,14.2 L2.6,11.8 Z" fill="none" stroke="#dcdcdc" stroke-width="1"/></svg>
<svg class="abs" style="left:24px;top:281.5px" width="3" height="3"><path d="M3,0 L3,3 L0,3 Z" fill="#e8e8e8"/></svg>
<svg class="abs" style="left:33.0px;top:266.0px" width="16" height="16" viewBox="0 0 16 16"><rect x="1.5" y="1.5" width="7" height="7" fill="#8c8c8c" stroke="#dcdcdc" stroke-width="1"/><rect x="4.3" y="3.6" width="6.4" height="6.4" fill="#a8a8a8" stroke="#dcdcdc" stroke-width="0.8"/><circle cx="11" cy="10.4" r="3.8" fill="#505050" stroke="#dcdcdc" stroke-width="1.2"/></svg>
<svg class="abs" style="left:9.0px;top:286.0px" width="16" height="17" viewBox="0 0 16 17"><rect x="5.6" y="5.6" width="7.6" height="9" rx="1" fill="none" stroke="#dcdcdc" stroke-width="1.2"/><rect x="7.6" y="2.4" width="3.6" height="3" fill="#dcdcdc"/><circle cx="9.4" cy="10.2" r="1.7" fill="#dcdcdc"/><g fill="#bdbdbd"><circle cx="2" cy="2.6" r="1"/><circle cx="4.6" cy="1.6" r="0.9"/><circle cx="4.2" cy="4.4" r="0.9"/><circle cx="1.6" cy="5.4" r="0.8"/></g></svg>
<svg class="abs" style="left:24px;top:301.5px" width="3" height="3"><path d="M3,0 L3,3 L0,3 Z" fill="#e8e8e8"/></svg>
<svg class="abs" style="left:33.0px;top:286.5px" width="16" height="16" viewBox="0 0 16 16"><path d="M2,2 V14 H15" fill="none" stroke="#dcdcdc" stroke-width="1.1"/><rect x="4" y="8" width="2.4" height="5.4" fill="#dcdcdc"/><rect x="8" y="4" width="2.4" height="9.4" fill="#dcdcdc"/><rect x="12" y="6.4" width="2.4" height="7" fill="#dcdcdc"/></svg>
<svg class="abs" style="left:48px;top:301.5px" width="3" height="3"><path d="M3,0 L3,3 L0,3 Z" fill="#e8e8e8"/></svg>
<svg class="abs" style="left:9.0px;top:306.0px" width="16" height="16" viewBox="0 0 16 16"><rect x="4" y="4" width="8" height="8" fill="#7a7a7a" stroke="#dcdcdc" stroke-width="1"/><path d="M4,1 V15 M12,1 V15 M1,4 H15 M1,12 H15" stroke="#dcdcdc" stroke-width="0.9"/></svg>
<svg class="abs" style="left:33.0px;top:306.0px" width="16" height="16" viewBox="0 0 16 16"><path d="M13.6,2 C14.6,3 14.4,4.2 13.4,5.2 L6.4,11 L4.6,9.2 L10.6,2.4 C11.6,1.4 12.8,1.2 13.6,2 Z" fill="#dcdcdc"/><path d="M4,9.8 L5.8,11.6 L1.6,14 Z" fill="#dcdcdc"/><path d="M6,10.6 L12,4" stroke="#505050" stroke-width="0.8"/></svg>
<svg class="abs" style="left:48px;top:321px" width="3" height="3"><path d="M3,0 L3,3 L0,3 Z" fill="#e8e8e8"/></svg>
<svg class="abs" style="left:9.0px;top:325.0px" width="16" height="16" viewBox="0 0 16 16"><path d="M4.6,14.8 C3.6,12.6 1.4,10 1.2,8.6 C1.1,7.6 2.4,7.4 3.2,8.4 L4.4,10 L4.2,3.2 C4.2,2 5.8,2 5.9,3.2 L6.2,7.2 L6.6,2 C6.7,0.8 8.3,0.8 8.3,2 L8.3,7.2 L9.2,2.6 C9.4,1.5 10.9,1.7 10.8,2.9 L10.3,7.6 L11.6,4.4 C12,3.4 13.4,3.8 13.1,4.9 L11.8,10.4 C11.5,12 11.2,13.2 10.4,14.8 Z" fill="#dcdcdc"/></svg>
<svg class="abs" style="left:24px;top:340px" width="3" height="3"><path d="M3,0 L3,3 L0,3 Z" fill="#e8e8e8"/></svg>
<svg class="abs" style="left:33.0px;top:325.0px" width="16" height="16" viewBox="0 0 16 16"><circle cx="6.4" cy="6" r="4.4" fill="#8c8c8c" stroke="#dcdcdc" stroke-width="1.4"/><path d="M9.6,9.4 L14,14.2" stroke="#dcdcdc" stroke-width="2.2" stroke-linecap="round"/></svg>
<div class="abs" style="left:19px;top:360.5px;width:28px;height:28px;background:#fff;border:1px solid #9a9a9a;box-sizing:border-box;"></div>
<div class="abs" style="left:27px;top:368.5px;width:12px;height:12px;background:#5a5a5a;"></div>
<svg class="abs" style="left:19px;top:360.5px" width="28" height="28"><path d="M1,27 L27,1" stroke="#d61f26" stroke-width="2"/></svg>
<div class="abs" style="left:5.5px;top:346px;width:27.5px;height:27px;background:#000;border:1px solid #b4b4b4;box-sizing:border-box;"></div>
<svg class="abs" style="left:38.2px;top:345.5px" width="11" height="10" viewBox="0 0 11 10"><path d="M2,3 C5,1.6 8,3.4 8.4,6.6" fill="none" stroke="#dcdcdc" stroke-width="1.1"/><path d="M0.6,4.6 L2.2,1.2 L4.2,4 Z M6.6,5.8 L10,6.2 L8,9 Z" fill="#dcdcdc"/></svg>
<div class="abs" style="left:9px;top:381.5px;width:5px;height:5px;background:#fff;border:1px solid #222;"></div><div class="abs" style="left:6px;top:378.5px;width:5px;height:5px;background:#111;border:1px solid #e8e8e8;"></div>
<div class="abs" style="left:6.5px;top:394px;width:43px;height:12.5px;background:#3a3a3a;"></div>
<div class="abs" style="left:9px;top:396px;width:9.5px;height:9px;background:#000;"></div>
<div class="abs" style="left:24px;top:396px;width:9.5px;height:9px;background:linear-gradient(90deg,#fff,#222);border:0.5px solid #ddd;box-sizing:border-box;"></div>
<div class="abs" style="left:38.5px;top:396px;width:9.5px;height:9px;background:#fff;"></div><svg class="abs" style="left:38.5px;top:396px" width="10" height="9"><path d="M0.5,8.5 L9,0.5" stroke="#d61f26" stroke-width="1.8"/></svg>
<div class="abs" style="left:7px;top:413.5px;width:14px;height:12px;background:#3a3a3a;"></div><div class="abs" style="left:21.5px;top:413.5px;width:29.5px;height:12px;background:#5c5c5c;"></div>
<svg class="abs" style="left:9.0px;top:415.0px" width="11" height="10" viewBox="0 0 11 10"><circle cx="4.6" cy="4.6" r="3.4" fill="none" stroke="#e0e0e0" stroke-width="1.1"/><rect x="4.6" y="4.6" width="5.6" height="4.6" fill="#e0e0e0"/></svg>
<svg class="abs" style="left:23.0px;top:415.0px" width="11" height="10" viewBox="0 0 11 10"><circle cx="4.6" cy="4.6" r="3.4" fill="none" stroke="#cfcfcf" stroke-width="1.1"/><rect x="4.8" y="4.8" width="5" height="4.2" fill="none" stroke="#cfcfcf" stroke-width="1"/></svg>
<svg class="abs" style="left:37.5px;top:415.0px" width="11" height="10" viewBox="0 0 11 10"><circle cx="5" cy="5" r="3.4" fill="none" stroke="#7c7c7c" stroke-width="1.1"/><circle cx="5" cy="5" r="1.4" fill="#7c7c7c"/></svg>
<svg class="abs" style="left:18.2px;top:433.0px" width="19" height="14" viewBox="0 0 19 14"><rect x="5.5" y="0.8" width="12.4" height="8.4" fill="#8e8e8e" stroke="#d8d8d8" stroke-width="1"/><rect x="0.8" y="4.6" width="12.4" height="8.4" fill="#5a5a5a" stroke="#d8d8d8" stroke-width="1"/></svg><!--/TOOLS-->
<!--DOCK--><div class="abs" style="left:811px;top:52px;width:189px;height:7px;background:#3d3d3d;"></div>
<svg class="abs" style="left:989.5px;top:53px" width="7" height="5" viewBox="0 0 7 5"><path d="M0.5,0.5 L2.8,2.5 L0.5,4.5 Z M3.8,0.5 L6.1,2.5 L3.8,4.5 Z" fill="#d8d8d8"/></svg>
<svg class="abs" style="left:800px;top:69px" width="9" height="7"><path d="M0.5,6 L4.5,1 L8.5,6 Z" fill="#e0e0e0"/></svg>
<div class="abs" style="left:798.5px;top:289px;width:12px;height:12px;background:#9c9c9c;"></div>
<div class="abs" style="left:812.5px;top:59px;width:187.5px;height:186px;background:#4b4b4b;"></div>
<div class="abs" style="left:812.5px;top:60px;width:187.5px;height:13.5px;background:#404040;"></div>
<div class="abs" style="left:812.5px;top:60px;width:34px;height:14px;background:#4b4b4b;"></div>
<svg class="abs" style="left:815px;top:62.5px" width="6" height="9"><path d="M0.8,3.6 L3,1 L5.2,3.6 Z M0.8,5.4 L3,8 L5.2,5.4 Z" fill="#e0e0e0"/></svg>
<div class="t ptab" style="left:822.5px;color:#f0f0f0;">颜色</div>
<div class="t ptab" style="left:853px;">颜色参考</div>
<div class="t ptab" style="left:902px;">描边</div>
<div class="t ptab" style="left:932px;">渐变</div>
<div class="abs" style="left:849.5px;top:61px;width:1px;height:12px;background:#363636;"></div><div class="abs" style="left:896px;top:61px;width:1px;height:12px;background:#363636;"></div><div class="abs" style="left:926.5px;top:61px;width:1px;height:12px;background:#363636;"></div><div class="abs" style="left:958px;top:61px;width:1px;height:12px;background:#363636;"></div>
<svg class="abs" style="left:986px;top:63.5px" width="12" height="8" viewBox="0 0 12 8"><path d="M0,2 L3.4,2 L1.7,4.4 Z" fill="#d0d0d0"/><path d="M4.6,1 H11 M4.6,3.4 H11 M4.6,5.8 H11" stroke="#d0d0d0" stroke-width="1"/></svg>
<div class="abs" style="left:821.5px;top:83.5px;width:4px;height:4px;background:#fff;border:1px solid #222;"></div><div class="abs" style="left:818.5px;top:80.5px;width:4px;height:4px;background:#111;border:1px solid #e8e8e8;"></div>
<svg class="abs" style="left:832px;top:79.5px" width="10" height="9" viewBox="0 0 11 10"><path d="M2,3 C5,1.6 8,3.4 8.4,6.6" fill="none" stroke="#dcdcdc" stroke-width="1.1"/><path d="M0.6,4.6 L2.2,1.2 L4.2,4 Z M6.6,5.8 L10,6.2 L8,9 Z" fill="#dcdcdc"/></svg>
<div class="abs" style="left:825.5px;top:102px;width:14.5px;height:14.5px;background:#fff;border:1px solid #9a9a9a;box-sizing:border-box;"></div><div class="abs" style="left:830px;top:106.5px;width:5.5px;height:5.5px;background:#5a5a5a;"></div><svg class="abs" style="left:825.5px;top:102px" width="15" height="15"><path d="M1,14 L14,1" stroke="#d61f26" stroke-width="1.6"/></svg>
<div class="abs" style="left:817px;top:93.5px;width:15px;height:15px;background:#000;border:1px solid #c8c8c8;box-sizing:border-box;"></div>
<div class="t" style="left:853.5px;top:84.7px;font-family:'Liberation Serif',serif;font-size:8.6px;font-weight:bold;color:#dedede;">C</div>
<div class="abs" style="left:868px;top:86.10000000000001px;width:80px;height:3.8px;background:#000;"></div>
<svg class="abs" style="left:943.5px;top:89.3px" width="9" height="7"><path d="M0.8,6.2 L0.8,4.6 L4.5,0.8 L8.2,4.6 L8.2,6.2 Z" fill="#ececec" stroke="#3a3a3a" stroke-width="0.6"/></svg>
<div class="abs fld" style="left:953px;top:81.2px;width:26px;height:14px;background:#a6a6a6;border-color:#3e3e3e;"><span class="ft" style="font-size:9.6px;left:3px;top:2px;color:#2a2a2a;letter-spacing:0.3px;">100</span></div>
<div class="t" style="left:981px;top:85.2px;font-family:'Liberation Serif',serif;font-size:7px;font-weight:bold;color:#dedede;">%</div>
<div class="t" style="left:853.5px;top:104.6px;font-family:'Liberation Serif',serif;font-size:8.6px;font-weight:bold;color:#dedede;">M</div>
<div class="abs" style="left:868px;top:106.0px;width:80px;height:3.8px;background:#000;"></div>
<svg class="abs" style="left:943.5px;top:109.19999999999999px" width="9" height="7"><path d="M0.8,6.2 L0.8,4.6 L4.5,0.8 L8.2,4.6 L8.2,6.2 Z" fill="#ececec" stroke="#3a3a3a" stroke-width="0.6"/></svg>
<div class="abs fld" style="left:953px;top:101.1px;width:26px;height:14px;background:#a6a6a6;border-color:#3e3e3e;"><span class="ft" style="font-size:9.6px;left:3px;top:2px;color:#2a2a2a;letter-spacing:0.3px;">100</span></div>
<div class="t" style="left:981px;top:105.1px;font-family:'Liberation Serif',serif;font-size:7px;font-weight:bold;color:#dedede;">%</div>
<div class="t" style="left:853.5px;top:124.4px;font-family:'Liberation Serif',serif;font-size:8.6px;font-weight:bold;color:#dedede;">Y</div>
<div class="abs" style="left:868px;top:125.80000000000001px;width:80px;height:3.8px;background:#000;"></div>
<svg class="abs" style="left:943.5px;top:129.0px" width="9" height="7"><path d="M0.8,6.2 L0.8,4.6 L4.5,0.8 L8.2,4.6 L8.2,6.2 Z" fill="#ececec" stroke="#3a3a3a" stroke-width="0.6"/></svg>
<div class="abs fld" style="left:953px;top:120.9px;width:26px;height:14px;background:#a6a6a6;border-color:#3e3e3e;"><span class="ft" style="font-size:9.6px;left:3px;top:2px;color:#2a2a2a;letter-spacing:0.3px;">100</span></div>
<div class="t" style="left:981px;top:124.9px;font-family:'Liberation Serif',serif;font-size:7px;font-weight:bold;color:#dedede;">%</div>
<div class="t" style="left:853.5px;top:144.3px;font-family:'Liberation Serif',serif;font-size:8.6px;font-weight:bold;color:#dedede;">K</div>
<div class="abs" style="left:868px;top:145.70000000000002px;width:80px;height:3.8px;background:#000;"></div>
<svg class="abs" style="left:943.5px;top:148.9px" width="9" height="7"><path d="M0.8,6.2 L0.8,4.6 L4.5,0.8 L8.2,4.6 L8.2,6.2 Z" fill="#ececec" stroke="#3a3a3a" stroke-width="0.6"/></svg>
<div class="abs fld" style="left:953px;top:140.8px;width:26px;height:14px;background:#a6a6a6;border-color:#3e3e3e;"><span class="ft" style="font-size:9.6px;left:3px;top:2px;color:#2a2a2a;letter-spacing:0.3px;">100</span></div>
<div class="t" style="left:981px;top:144.8px;font-family:'Liberation Serif',serif;font-size:7px;font-weight:bold;color:#dedede;">%</div>
<div class="abs" style="left:817.5px;top:163px;width:10.2px;height:10.5px;background:#fff;"></div><svg class="abs" style="left:817.5px;top:163px" width="11" height="11"><path d="M0.5,10 L10,0.5" stroke="#d61f26" stroke-width="1.5"/></svg>
<div class="abs" style="left:827.7px;top:163px;width:10.2px;height:10.5px;background:#000;"></div><div class="abs" style="left:837.9px;top:163px;width:10.2px;height:10.5px;background:#fff;"></div>
<div class="abs" style="left:818px;top:182px;width:169px;height:56.5px;background:linear-gradient(90deg,#ff0000 0%,#fff200 16%,#1aa838 34%,#22a6d2 54%,#1c1c96 68%,#e0168a 85%,#ff0018 100%);"></div>
<div class="abs" style="left:818px;top:182px;width:169px;height:56.5px;background:linear-gradient(180deg,rgba(255,255,255,1) 0%,rgba(255,255,255,0.95) 4%,rgba(255,255,255,0) 50%,rgba(0,0,0,0) 56%,rgba(0,0,0,0.55) 80%,rgba(0,0,0,1) 100%);"></div>
<div class="abs" style="left:811px;top:245px;width:189px;height:2px;background:#383838;"></div>
<div class="abs" style="left:812.5px;top:247px;width:187.5px;height:160px;background:#4b4b4b;"></div>
<div class="abs" style="left:812.5px;top:247px;width:187.5px;height:13.5px;background:#404040;"></div>
<div class="abs" style="left:873.5px;top:247px;width:30.5px;height:14px;background:#4f4f4f;"></div>
<div class="t ptab" style="left:819px;top:250px;">色板</div><div class="t ptab" style="left:849px;top:250px;">画笔</div><div class="t ptab" style="left:880px;top:250px;color:#f0f0f0;">图层</div><div class="t ptab" style="left:909.5px;top:250px;">路径查找器</div>
<div class="abs" style="left:843px;top:248px;width:1px;height:12px;background:#363636;"></div><div class="abs" style="left:873px;top:248px;width:1px;height:12px;background:#363636;"></div><div class="abs" style="left:904px;top:248px;width:1px;height:12px;background:#363636;"></div><div class="abs" style="left:962px;top:248px;width:1px;height:12px;background:#363636;"></div>
<svg class="abs" style="left:986px;top:250.5px" width="12" height="8" viewBox="0 0 12 8"><path d="M0,2 L3.4,2 L1.7,4.4 Z" fill="#d0d0d0"/><path d="M4.6,1 H11 M4.6,3.4 H11 M4.6,5.8 H11" stroke="#d0d0d0" stroke-width="1"/></svg>
<div class="abs" style="left:817.7px;top:267.0px;width:168.5px;height:15.3px;background:#5f6b86;overflow:hidden;"></div>
<div class="abs" style="left:817.7px;top:282.3px;width:168.5px;height:1px;background:#3a3a3a;"></div>
<div class="abs" style="left:834.3px;top:267.0px;width:1px;height:15.3px;background:#3c3c3c;"></div>
<div class="abs" style="left:850.7px;top:267.0px;width:1px;height:15.3px;background:#3c3c3c;"></div>
<div class="abs" style="left:958.6px;top:267.0px;width:1px;height:15.3px;background:#3c3c3c;"></div>
<div class="abs" style="left:851.2px;top:267.0px;width:3.4px;height:15.3px;background:#5379dc;"></div>
<svg class="abs" style="left:820.5px;top:270.4px" width="11" height="8" viewBox="0 0 11 8"><path d="M0.5,4.2 C2.5,0.6 8.5,0.6 10.5,4.2 C8.5,7.4 2.5,7.4 0.5,4.2 Z" fill="#d8d8d8"/><circle cx="5.5" cy="4" r="2.2" fill="#3c3c3c"/><circle cx="4.8" cy="3.2" r="0.8" fill="#e8e8e8"/></svg>
<div class="abs" style="left:871.7px;top:268.0px;width:13.5px;height:13px;background:#13233f;overflow:hidden;border-radius:2px;"><div class="abs" style="left:2px;top:1.5px;width:9.5px;height:9px;border-radius:5px;background:#1d4a7c;"></div><div class="abs" style="left:5px;top:5px;width:3.5px;height:3px;border-radius:2px;background:#e89a3a;"></div><div class="abs" style="left:2.5px;top:3px;width:2.5px;height:2.5px;border-radius:2px;background:#e6eef6;"></div><div class="abs" style="left:8.5px;top:3px;width:2.5px;height:2.5px;border-radius:2px;background:#e6eef6;"></div></div>
<svg class="abs" style="left:961.5px;top:269.6px" width="10" height="10"><circle cx="5" cy="5" r="3.3" fill="none" stroke="#d0d0d0" stroke-width="0.9"/><circle cx="5" cy="5" r="1.1" fill="#d0d0d0"/></svg>
<div class="abs" style="left:974px;top:271.4px;width:4.2px;height:4.2px;background:#3d62dc;border:1px solid #e8e8e8;"></div>
<div class="abs" style="left:817.7px;top:283.3px;width:168.5px;height:15.3px;background:#525252;overflow:hidden;"></div>
<div class="abs" style="left:817.7px;top:298.6px;width:168.5px;height:1px;background:#3a3a3a;"></div>
<div class="abs" style="left:834.3px;top:283.3px;width:1px;height:15.3px;background:#3c3c3c;"></div>
<div class="abs" style="left:850.7px;top:283.3px;width:1px;height:15.3px;background:#3c3c3c;"></div>
<div class="abs" style="left:958.6px;top:283.3px;width:1px;height:15.3px;background:#3c3c3c;"></div>
<div class="abs" style="left:851.2px;top:283.3px;width:3.4px;height:15.3px;background:#5379dc;"></div>
<svg class="abs" style="left:820.5px;top:286.7px" width="11" height="8" viewBox="0 0 11 8"><path d="M0.5,4.2 C2.5,0.6 8.5,0.6 10.5,4.2 C8.5,7.4 2.5,7.4 0.5,4.2 Z" fill="#d8d8d8"/><circle cx="5.5" cy="4" r="2.2" fill="#3c3c3c"/><circle cx="4.8" cy="3.2" r="0.8" fill="#e8e8e8"/></svg>
<div class="abs" style="left:887.5px;top:284.3px;width:13.5px;height:13px;background:#fff;overflow:hidden;"><div class="abs" style="left:1px;top:5px;width:11.5px;height:3.5px;background:#3a6a9a;border-radius:0 0 6px 6px;"></div><div class="abs" style="left:1px;top:4px;width:11.5px;height:1.5px;background:#b8d0e8;"></div></div>
<svg class="abs" style="left:960.5px;top:284.9px" width="12" height="12"><circle cx="6" cy="6" r="4.8" fill="#8e8e8e" stroke="#d8d8d8" stroke-width="0.9"/><circle cx="6" cy="6" r="2.6" fill="#9e9e9e" stroke="#e8e8e8" stroke-width="0.9"/></svg>
<div class="abs" style="left:974px;top:287.7px;width:4.2px;height:4.2px;background:#3d62dc;border:1px solid #e8e8e8;"></div>
<div class="abs" style="left:817.7px;top:299.6px;width:168.5px;height:15.3px;background:#525252;overflow:hidden;"></div>
<div class="abs" style="left:817.7px;top:314.9px;width:168.5px;height:1px;background:#3a3a3a;"></div>
<div class="abs" style="left:834.3px;top:299.6px;width:1px;height:15.3px;background:#3c3c3c;"></div>
<div class="abs" style="left:850.7px;top:299.6px;width:1px;height:15.3px;background:#3c3c3c;"></div>
<div class="abs" style="left:958.6px;top:299.6px;width:1px;height:15.3px;background:#3c3c3c;"></div>
<div class="abs" style="left:851.2px;top:299.6px;width:3.4px;height:15.3px;background:#5379dc;"></div>
<svg class="abs" style="left:820.5px;top:303.0px" width="11" height="8" viewBox="0 0 11 8"><path d="M0.5,4.2 C2.5,0.6 8.5,0.6 10.5,4.2 C8.5,7.4 2.5,7.4 0.5,4.2 Z" fill="#d8d8d8"/><circle cx="5.5" cy="4" r="2.2" fill="#3c3c3c"/><circle cx="4.8" cy="3.2" r="0.8" fill="#e8e8e8"/></svg>
<div class="abs" style="left:887.5px;top:300.6px;width:13.5px;height:13px;background:#1b2e4a;overflow:hidden;"><div class="abs" style="left:0.8px;top:0.5px;width:12px;height:12px;border-radius:6px;background:radial-gradient(circle at 45% 40%,#6fb6dc,#2a78aa 70%,#1d5c8a);"></div></div>
<svg class="abs" style="left:961.5px;top:302.2px" width="10" height="10"><circle cx="5" cy="5" r="3.3" fill="none" stroke="#d0d0d0" stroke-width="0.9"/><circle cx="5" cy="5" r="1.1" fill="#d0d0d0"/></svg>
<div class="abs" style="left:817.7px;top:315.9px;width:168.5px;height:15.3px;background:#525252;overflow:hidden;"></div>
<div class="abs" style="left:817.7px;top:331.2px;width:168.5px;height:1px;background:#3a3a3a;"></div>
<div class="abs" style="left:834.3px;top:315.9px;width:1px;height:15.3px;background:#3c3c3c;"></div>
<div class="abs" style="left:850.7px;top:315.9px;width:1px;height:15.3px;background:#3c3c3c;"></div>
<div class="abs" style="left:958.6px;top:315.9px;width:1px;height:15.3px;background:#3c3c3c;"></div>
<div class="abs" style="left:851.2px;top:315.9px;width:3.4px;height:15.3px;background:#5379dc;"></div>
<svg class="abs" style="left:820.5px;top:319.3px" width="11" height="8" viewBox="0 0 11 8"><path d="M0.5,4.2 C2.5,0.6 8.5,0.6 10.5,4.2 C8.5,7.4 2.5,7.4 0.5,4.2 Z" fill="#d8d8d8"/><circle cx="5.5" cy="4" r="2.2" fill="#3c3c3c"/><circle cx="4.8" cy="3.2" r="0.8" fill="#e8e8e8"/></svg>
<div class="abs" style="left:887.5px;top:316.9px;width:13.5px;height:13px;background:#1b2e4a;overflow:hidden;"><div class="abs" style="left:0.8px;top:0.5px;width:12px;height:12px;border-radius:6px;background:radial-gradient(circle at 45% 40%,#6fb6dc,#2a78aa 70%,#1d5c8a);"></div></div>
<svg class="abs" style="left:961.5px;top:318.5px" width="10" height="10"><circle cx="5" cy="5" r="3.3" fill="none" stroke="#d0d0d0" stroke-width="0.9"/><circle cx="5" cy="5" r="1.1" fill="#d0d0d0"/></svg>
<div class="abs" style="left:817.7px;top:332.2px;width:168.5px;height:15.3px;background:#525252;overflow:hidden;"></div>
<div class="abs" style="left:817.7px;top:347.5px;width:168.5px;height:1px;background:#3a3a3a;"></div>
<div class="abs" style="left:834.3px;top:332.2px;width:1px;height:15.3px;background:#3c3c3c;"></div>
<div class="abs" style="left:850.7px;top:332.2px;width:1px;height:15.3px;background:#3c3c3c;"></div>
<div class="abs" style="left:958.6px;top:332.2px;width:1px;height:15.3px;background:#3c3c3c;"></div>
<div class="abs" style="left:851.2px;top:332.2px;width:3.4px;height:15.3px;background:#5379dc;"></div>
<svg class="abs" style="left:820.5px;top:335.6px" width="11" height="8" viewBox="0 0 11 8"><path d="M0.5,4.2 C2.5,0.6 8.5,0.6 10.5,4.2 C8.5,7.4 2.5,7.4 0.5,4.2 Z" fill="#d8d8d8"/><circle cx="5.5" cy="4" r="2.2" fill="#3c3c3c"/><circle cx="4.8" cy="3.2" r="0.8" fill="#e8e8e8"/></svg>
<div class="abs" style="left:887.5px;top:333.2px;width:13.5px;height:13px;background:#13233f;overflow:hidden;border-radius:2px;"><div class="abs" style="left:2px;top:1.5px;width:9.5px;height:9px;border-radius:5px;background:#1d4a7c;"></div><div class="abs" style="left:5px;top:5px;width:3.5px;height:3px;border-radius:2px;background:#e89a3a;"></div><div class="abs" style="left:2.5px;top:3px;width:2.5px;height:2.5px;border-radius:2px;background:#e6eef6;"></div><div class="abs" style="left:8.5px;top:3px;width:2.5px;height:2.5px;border-radius:2px;background:#e6eef6;"></div></div>
<svg class="abs" style="left:961.5px;top:334.8px" width="10" height="10"><circle cx="5" cy="5" r="3.3" fill="none" stroke="#d0d0d0" stroke-width="0.9"/><circle cx="5" cy="5" r="1.1" fill="#d0d0d0"/></svg>
<div class="abs" style="left:817.7px;top:348.5px;width:168.5px;height:15.3px;background:#525252;overflow:hidden;"></div>
<div class="abs" style="left:817.7px;top:363.8px;width:168.5px;height:1px;background:#3a3a3a;"></div>
<div class="abs" style="left:834.3px;top:348.5px;width:1px;height:15.3px;background:#3c3c3c;"></div>
<div class="abs" style="left:850.7px;top:348.5px;width:1px;height:15.3px;background:#3c3c3c;"></div>
<div class="abs" style="left:958.6px;top:348.5px;width:1px;height:15.3px;background:#3c3c3c;"></div>
<div class="abs" style="left:851.2px;top:348.5px;width:3.4px;height:15.3px;background:#5379dc;"></div>
<svg class="abs" style="left:820.5px;top:351.9px" width="11" height="8" viewBox="0 0 11 8"><path d="M0.5,4.2 C2.5,0.6 8.5,0.6 10.5,4.2 C8.5,7.4 2.5,7.4 0.5,4.2 Z" fill="#d8d8d8"/><circle cx="5.5" cy="4" r="2.2" fill="#3c3c3c"/><circle cx="4.8" cy="3.2" r="0.8" fill="#e8e8e8"/></svg>
<div class="abs" style="left:903.8px;top:349.5px;width:13.5px;height:13px;background:#fff;overflow:hidden;"><div class="abs" style="left:1.5px;top:5.5px;width:10.5px;height:2.5px;background:#111a30;"></div><div class="abs" style="left:5px;top:4px;width:3.5px;height:5px;border-radius:2px;background:#0a1020;"></div></div>
<svg class="abs" style="left:961.5px;top:351.1px" width="10" height="10"><circle cx="5" cy="5" r="3.3" fill="none" stroke="#d0d0d0" stroke-width="0.9"/><circle cx="5" cy="5" r="1.1" fill="#d0d0d0"/></svg>
<div class="abs" style="left:817.7px;top:364.8px;width:168.5px;height:15.3px;background:#525252;overflow:hidden;"></div>
<div class="abs" style="left:817.7px;top:380.1px;width:168.5px;height:1px;background:#3a3a3a;"></div>
<div class="abs" style="left:834.3px;top:364.8px;width:1px;height:15.3px;background:#3c3c3c;"></div>
<div class="abs" style="left:850.7px;top:364.8px;width:1px;height:15.3px;background:#3c3c3c;"></div>
<div class="abs" style="left:958.6px;top:364.8px;width:1px;height:15.3px;background:#3c3c3c;"></div>
<div class="abs" style="left:851.2px;top:364.8px;width:3.4px;height:15.3px;background:#5379dc;"></div>
<svg class="abs" style="left:820.5px;top:368.2px" width="11" height="8" viewBox="0 0 11 8"><path d="M0.5,4.2 C2.5,0.6 8.5,0.6 10.5,4.2 C8.5,7.4 2.5,7.4 0.5,4.2 Z" fill="#d8d8d8"/><circle cx="5.5" cy="4" r="2.2" fill="#3c3c3c"/><circle cx="4.8" cy="3.2" r="0.8" fill="#e8e8e8"/></svg>
<div class="abs" style="left:903.8px;top:365.8px;width:13.5px;height:13px;background:#fff;overflow:hidden;"><div class="abs" style="left:2.5px;top:4px;width:3px;height:1.2px;background:#7aa;transform:rotate(20deg);"></div><div class="abs" style="left:8px;top:4px;width:3px;height:1.2px;background:#7aa;transform:rotate(-20deg);"></div><div class="abs" style="left:5px;top:8px;width:4px;height:1.4px;background:#89b;"></div></div>
<svg class="abs" style="left:961.5px;top:367.4px" width="10" height="10"><circle cx="5" cy="5" r="3.3" fill="none" stroke="#d0d0d0" stroke-width="0.9"/><circle cx="5" cy="5" r="1.1" fill="#d0d0d0"/></svg>
<div class="abs" style="left:817.7px;top:381.1px;width:168.5px;height:15.3px;background:#525252;overflow:hidden;"></div>
<div class="abs" style="left:817.7px;top:396.4px;width:168.5px;height:1px;background:#3a3a3a;"></div>
<div class="abs" style="left:834.3px;top:381.1px;width:1px;height:15.3px;background:#3c3c3c;"></div>
<div class="abs" style="left:850.7px;top:381.1px;width:1px;height:15.3px;background:#3c3c3c;"></div>
<div class="abs" style="left:958.6px;top:381.1px;width:1px;height:15.3px;background:#3c3c3c;"></div>
<div class="abs" style="left:851.2px;top:381.1px;width:3.4px;height:15.3px;background:#5379dc;"></div>
<svg class="abs" style="left:820.5px;top:384.5px" width="11" height="8" viewBox="0 0 11 8"><path d="M0.5,4.2 C2.5,0.6 8.5,0.6 10.5,4.2 C8.5,7.4 2.5,7.4 0.5,4.2 Z" fill="#d8d8d8"/><circle cx="5.5" cy="4" r="2.2" fill="#3c3c3c"/><circle cx="4.8" cy="3.2" r="0.8" fill="#e8e8e8"/></svg>
<div class="abs" style="left:903.8px;top:382.1px;width:13.5px;height:13px;background:#fff;overflow:hidden;"><svg class="abs" style="left:0;top:0" width="14" height="13"><path d="M10.5,1.5 L4,6.5 L10.5,11.5 L8,6.5 Z" fill="#0e1d34"/></svg></div>
<svg class="abs" style="left:961.5px;top:383.7px" width="10" height="10"><circle cx="5" cy="5" r="3.3" fill="none" stroke="#d0d0d0" stroke-width="0.9"/><circle cx="5" cy="5" r="1.1" fill="#d0d0d0"/></svg>
<div class="abs" style="left:817.7px;top:397.4px;width:168.5px;height:8.6px;background:#525252;overflow:hidden;"></div>
<div class="abs" style="left:817.7px;top:406.0px;width:168.5px;height:1px;background:#3a3a3a;"></div>
<div class="abs" style="left:834.3px;top:397.4px;width:1px;height:8.6px;background:#3c3c3c;"></div>
<div class="abs" style="left:850.7px;top:397.4px;width:1px;height:8.6px;background:#3c3c3c;"></div>
<div class="abs" style="left:958.6px;top:397.4px;width:1px;height:8.6px;background:#3c3c3c;"></div>
<div class="abs" style="left:851.2px;top:397.4px;width:3.4px;height:8.6px;background:#5379dc;"></div>
<svg class="abs" style="left:820.5px;top:400.8px" width="11" height="8" viewBox="0 0 11 8"><path d="M0.5,4.2 C2.5,0.6 8.5,0.6 10.5,4.2 C8.5,7.4 2.5,7.4 0.5,4.2 Z" fill="#d8d8d8"/><circle cx="5.5" cy="4" r="2.2" fill="#3c3c3c"/><circle cx="4.8" cy="3.2" r="0.8" fill="#e8e8e8"/></svg>
<div class="abs" style="left:903.8px;top:398.4px;width:13.5px;height:9px;overflow:hidden;"><div class="abs" style="left:0px;top:0px;width:13.5px;height:13px;background:#fff;overflow:hidden;"><svg class="abs" style="left:0;top:0" width="14" height="13"><path d="M10.5,1.5 L3.5,11 L10.5,13 Z" fill="#8fc4e0"/><path d="M10.5,1.5 L7,8 L10.5,13 Z" fill="#5a9cc4"/></svg></div></div>
<svg class="abs" style="left:961.5px;top:400.0px" width="10" height="10"><circle cx="5" cy="5" r="3.3" fill="none" stroke="#d0d0d0" stroke-width="0.9"/><circle cx="5" cy="5" r="1.1" fill="#d0d0d0"/></svg>
<svg class="abs" style="left:858px;top:272.0px" width="8" height="6"><path d="M0.5,0.5 L7.5,0.5 L4,5.5 Z" fill="#f0f0f0"/></svg>
<div class="t" style="left:890.5px;top:270.0px;font-family:'Liberation Serif','Noto Serif CJK SC',serif;font-size:9.5px;color:#f0f0f0;">图层 1</div>
<svg class="abs" style="left:983px;top:267.0px" width="4" height="4"><path d="M0,0 L4,0 L4,4 Z" fill="#e8e8e8"/></svg>
<div class="t" style="left:905px;top:286.8px;font-family:'Liberation Mono',monospace;font-size:9px;color:#dcdcdc;letter-spacing:-0.5px;">&lt;...</div>
<div class="t" style="left:905px;top:303.1px;font-family:'Liberation Mono',monospace;font-size:9px;color:#dcdcdc;letter-spacing:-0.5px;">&lt;...</div>
<div class="t" style="left:905px;top:319.4px;font-family:'Liberation Mono',monospace;font-size:9px;color:#dcdcdc;letter-spacing:-0.5px;">&lt;...</div>
<div class="t" style="left:905px;top:335.7px;font-family:'Liberation Mono',monospace;font-size:9px;color:#dcdcdc;letter-spacing:-0.5px;">&lt;...</div>
<svg class="abs" style="left:873.5px;top:337.2px" width="8" height="6"><path d="M0.5,0.5 L7.5,0.5 L4,5.5 Z" fill="#f0f0f0"/></svg>
<svg class="abs" style="left:890px;top:352.1px" width="6" height="8"><path d="M0.5,0.5 L5.5,4 L0.5,7.5 Z" fill="#f0f0f0"/></svg>
<svg class="abs" style="left:890px;top:368.4px" width="6" height="8"><path d="M0.5,0.5 L5.5,4 L0.5,7.5 Z" fill="#f0f0f0"/></svg>
<div class="abs" style="left:986.8px;top:266px;width:10.5px;height:141px;background:#3a3a3a;"></div>
<svg class="abs" style="left:988px;top:268px" width="8" height="6"><path d="M0.5,5.4 L4,0.8 L7.5,5.4 Z" fill="#e8e8e8"/></svg>
<div class="abs" style="left:987.3px;top:278.5px;width:9.5px;height:37px;background:#8c8c8c;"></div>
<div class="abs" style="left:811px;top:407px;width:189px;height:123px;background:#494949;"></div>
<div class="abs" style="left:986px;top:425px;width:10px;height:105px;background:linear-gradient(180deg,#4a4a4a,#515151 30%,#4c4c4c 60%,#505050);opacity:0.8;"></div><!--/DOCK-->
<!--STATUS--><div class="abs" style="left:743px;top:517px;width:55px;height:13px;background:#fff;"></div>
<svg class="abs" style="left:738px;top:517px" width="8" height="13"><path d="M0,0 L5.5,0 L4,13 L0,13 Z" fill="#2c2c2c"/><path d="M5.5,0 L8,0 L8,13 L4,13 Z" fill="#fff"/></svg>
<div class="abs" style="left:122px;top:518.8px;width:16px;height:10.5px;background:#b4b4b4;"></div>
<div class="t" style="left:129.5px;top:520px;font-family:'Liberation Serif',serif;font-size:9.5px;color:#222;">54</div>
<div class="abs" style="left:139px;top:518.8px;width:11px;height:10.5px;background:#464646;border:1px solid #2a2a2a;box-sizing:border-box;"></div>
<svg class="abs" style="left:141px;top:522px" width="8" height="6"><path d="M0.5,0.5 L7,0.5 L3.8,5 Z" fill="#e8e8e8"/></svg>
<svg class="abs" style="left:158px;top:520.5px" width="20" height="8" viewBox="0 0 20 8"><path d="M1,0.5 V7.5" stroke="#7a7a7a" stroke-width="1.2"/><path d="M6.5,0.5 L2.5,4 L6.5,7.5 Z M16.5,0.5 L12.5,4 L16.5,7.5 Z" fill="#7a7a7a"/></svg>
<div class="abs" style="left:185px;top:518.8px;width:33px;height:10.5px;background:#b4b4b4;"></div>
<div class="t" style="left:187px;top:520px;font-family:'Liberation Serif',serif;font-size:9.5px;color:#222;">1</div>
<div class="abs" style="left:218px;top:518.8px;width:11px;height:10.5px;background:#464646;border:1px solid #2a2a2a;box-sizing:border-box;"></div>
<svg class="abs" style="left:220px;top:522px" width="8" height="6"><path d="M0.5,0.5 L7,0.5 L3.8,5 Z" fill="#e8e8e8"/></svg>
<svg class="abs" style="left:238px;top:520.5px" width="20" height="8" viewBox="0 0 20 8"><path d="M3,0.5 L7,4 L3,7.5 Z M12,0.5 L16,4 L12,7.5 Z" fill="#7a7a7a"/><path d="M18,0.5 V7.5" stroke="#7a7a7a" stroke-width="1.2"/></svg>
<div class="t" style="left:322.5px;top:520px;font-size:8.8px;color:#e4e4e4;">直接选择</div>
<svg class="abs" style="left:423px;top:520.5px" width="6" height="8"><path d="M0.5,0.5 L5,4 L0.5,7.5 Z" fill="#d8d8d8"/></svg>
<div class="abs" style="left:432px;top:517px;width:307px;height:13px;background:#2c2c2c;"></div>
<svg class="abs" style="left:437px;top:520.5px" width="6" height="8"><path d="M5.5,0.5 L1,4 L5.5,7.5 Z" fill="#f4f4f4"/></svg>
<div class="abs" style="left:609px;top:517.5px;width:11px;height:12.5px;background:#9c9c9c;"></div>
<div class="abs" style="left:0;top:510px;width:129px;height:20px;background:#f5f8fc;border-top-right-radius:3px;border-top:1px solid #dfe6ee;border-right:1px solid #d8dde4;box-sizing:border-box;"></div>
<svg class="abs" style="left:0px;top:507px" width="24" height="23" viewBox="0 0 24 23"><defs><linearGradient id="sg" x1="0" y1="0" x2="0" y2="1"><stop offset="0" stop-color="#58c848"/><stop offset="1" stop-color="#2e9e2c"/></linearGradient></defs><path d="M1.5,5 L17.5,0.8 C19.2,0.4 20.3,1.2 20.6,2.8 L22.6,17 C22.8,18.6 22.2,19.8 20.8,20.4 L13,23 L0,23 L0,7 C0,5.8 0.5,5.3 1.5,5 Z" fill="url(#sg)"/><text x="3.2" y="19.6" font-family="Liberation Sans, sans-serif" font-weight="bold" font-size="17" fill="#fff" transform="translate(0,0) skewX(-4) scale(1.12,0.92)" >S</text></svg>
<div class="t" style="left:27px;top:513px;font-size:12px;font-weight:bold;color:#2e3448;">五</div>
<svg class="abs" style="left:44px;top:512px" width="12" height="13" viewBox="0 0 12 13"><path d="M7.4,0.8 C8.6,4.8 6.8,8.6 1.4,10 C5,13.2 11.4,11.4 11.6,6 C11.6,3.6 10,1.6 7.4,0.8 Z" fill="#32384c"/></svg>
<svg class="abs" style="left:61px;top:513px" width="10" height="12" viewBox="0 0 10 12"><circle cx="2.6" cy="3.4" r="1.5" fill="none" stroke="#2b2b2b" stroke-width="1.1"/><path d="M7,6.4 C8.4,6.4 8.6,8.6 6.4,10" fill="none" stroke="#2b2b2b" stroke-width="1.4"/><circle cx="7" cy="6.4" r="1.1" fill="#2b2b2b"/></svg>
<svg class="abs" style="left:78px;top:514px" width="14" height="10" viewBox="0 0 14 10"><rect x="0.6" y="0.6" width="12.8" height="8.8" rx="1.4" fill="#3a4a5e"/><g fill="#fff"><rect x="2.2" y="2.2" width="1.6" height="1.4"/><rect x="4.8" y="2.2" width="1.6" height="1.4"/><rect x="7.4" y="2.2" width="1.6" height="1.4"/><rect x="10" y="2.2" width="1.6" height="1.4"/><rect x="2.2" y="4.4" width="1.6" height="1.4"/><rect x="4.8" y="4.4" width="1.6" height="1.4"/><rect x="7.4" y="4.4" width="1.6" height="1.4"/><rect x="10" y="4.4" width="1.6" height="1.4"/><rect x="3.4" y="6.6" width="7.2" height="1.3"/></g></svg>
<svg class="abs" style="left:97px;top:512px" width="11" height="13" viewBox="0 0 11 13"><circle cx="5.5" cy="3.4" r="2.4" fill="#c4dcd2"/><path d="M0.8,12.4 C0.8,7 10.2,7 10.2,12.4 Z" fill="#c4dcd2"/></svg>
<svg class="abs" style="left:112px;top:512px" width="13" height="13" viewBox="0 0 13 13"><path d="M2,12 L7.2,6.4" stroke="#333" stroke-width="2.4" stroke-linecap="round"/><path d="M8.6,1 C6.2,1.4 5.4,4 6.8,6 C8.6,7.6 11.6,6.6 12,4.2 L9.8,5.4 L8,4 L8.4,1.6 Z" fill="#333"/></svg><!--/STATUS-->
</body>
</html>
